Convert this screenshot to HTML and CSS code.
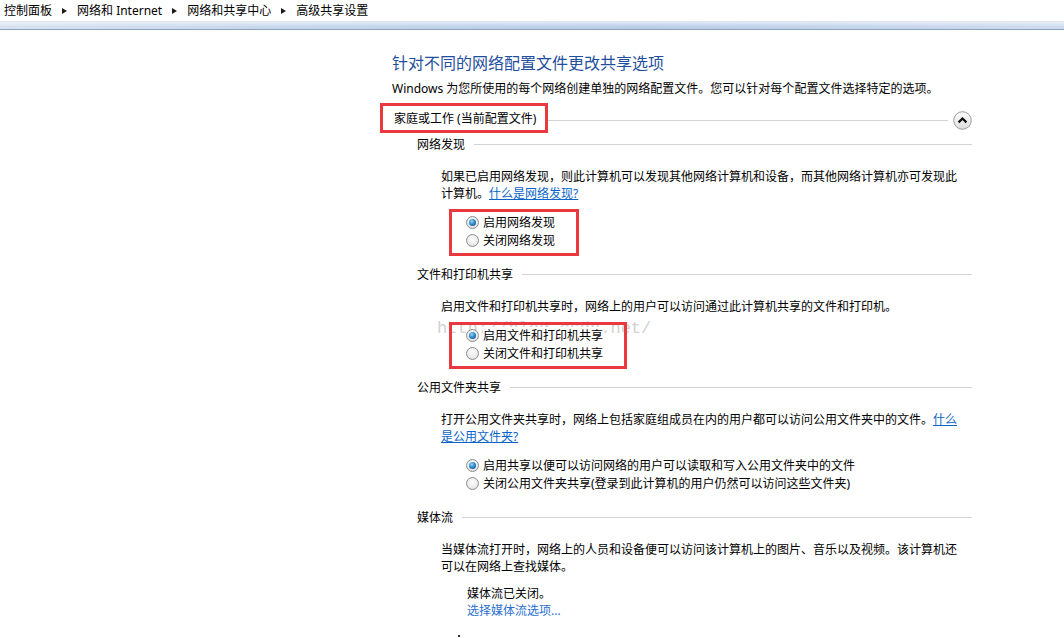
FILE: index.html
```html
<!DOCTYPE html>
<html lang="zh-CN">
<head>
<meta charset="utf-8">
<title>高级共享设置</title>
<link rel="stylesheet" href="styles.css">
</head>
<body>
<header class="crumbbar">
  <nav class="crumbs">
    <span>控制面板</span><i class="sep"></i>
    <span>网络和 Internet</span><i class="sep"></i>
    <span>网络和共享中心</span><i class="sep"></i>
    <span>高级共享设置</span>
  </nav>
</header>
<div class="band"></div>
<main class="content">
  <h1 class="title">针对不同的网络配置文件更改共享选项</h1>
  <p class="intro">Windows 为您所使用的每个网络创建单独的网络配置文件。您可以针对每个配置文件选择特定的选项。</p>

  <div class="profile-head">
    <span class="profile-name">家庭或工作 (当前配置文件)</span>
    <span class="rule rule-profile"></span>
    <span class="collapse">
      <svg width="19" height="19" viewBox="0 0 19 19">
        <defs>
          <linearGradient id="cg" x1="0" y1="0" x2="0" y2="1">
            <stop offset="0" stop-color="#ffffff"/>
            <stop offset="1" stop-color="#dcdcdc"/>
          </linearGradient>
        </defs>
        <circle cx="9.5" cy="9.5" r="8.8" fill="url(#cg)" stroke="#9d9d9d" stroke-width="1"/>
        <path d="M5.6 11.4 L9.5 7.5 L13.4 11.4" fill="none" stroke="#111" stroke-width="2.2" stroke-linejoin="miter"/>
      </svg>
    </span>
  </div>

  <section class="sec first">
    <div class="sec-head"><span>网络发现</span><span class="rule"></span></div>
    <p class="desc">如果已启用网络发现，则此计算机可以发现其他网络计算机和设备，而其他网络计算机亦可发现此计算机。<a class="link" href="#">什么是网络发现?</a></p>
    <div class="options marked">
      <label class="opt"><span class="radio on"></span><span class="lbl">启用网络发现</span></label>
      <label class="opt"><span class="radio"></span><span class="lbl">关闭网络发现</span></label>
    </div>
  </section>

  <section class="sec">
    <div class="sec-head"><span>文件和打印机共享</span><span class="rule"></span></div>
    <p class="desc">启用文件和打印机共享时，网络上的用户可以访问通过此计算机共享的文件和打印机。</p>
    <div class="options marked">
      <span class="watermark">http://blog.csdn.net/</span>
      <label class="opt"><span class="radio on"></span><span class="lbl">启用文件和打印机共享</span></label>
      <label class="opt"><span class="radio"></span><span class="lbl">关闭文件和打印机共享</span></label>
    </div>
  </section>

  <section class="sec">
    <div class="sec-head"><span>公用文件夹共享</span><span class="rule"></span></div>
    <p class="desc">打开公用文件夹共享时，网络上包括家庭组成员在内的用户都可以访问公用文件夹中的文件。<a class="link" href="#">什么是公用文件夹?</a></p>
    <div class="options">
      <label class="opt"><span class="radio on"></span><span class="lbl">启用共享以便可以访问网络的用户可以读取和写入公用文件夹中的文件</span></label>
      <label class="opt"><span class="radio"></span><span class="lbl">关闭公用文件夹共享(登录到此计算机的用户仍然可以访问这些文件夹)</span></label>
    </div>
  </section>

  <section class="sec">
    <div class="sec-head"><span>媒体流</span><span class="rule"></span></div>
    <p class="desc">当媒体流打开时，网络上的人员和设备便可以访问该计算机上的图片、音乐以及视频。该计算机还可以在网络上查找媒体。</p>
    <div class="media">
      <div>媒体流已关闭。</div>
      <a class="link plain" href="#">选择媒体流选项...</a>
    </div>
  </section>
  <div class="dot"></div>
</main>
</body>
</html>
```

FILE: styles.css
```css
* { box-sizing: border-box; }
html, body { margin: 0; padding: 0; background: #fff; }
body {
  width: 1064px;
  height: 638px;
  overflow: hidden;
  font-family: "Noto Sans", "Noto Sans CJK SC", sans-serif;
  font-size: 12px;
  color: #000;
}

/* breadcrumb */
.crumbbar { height: 21px; background: #fff; }
.crumbs {
  display: flex;
  align-items: center;
  height: 21px;
  padding-left: 4px;
  line-height: 21px;
  color: #000;
}
.sep {
  display: block;
  width: 0;
  height: 0;
  margin: 0 10px;
  border-left: 5px solid #1a1a1a;
  border-top: 3.5px solid transparent;
  border-bottom: 3.5px solid transparent;
}
.band {
  height: 9px;
  border-top: 1px solid #e1e6ee;
  border-bottom: 1px solid #8ea1bb;
  background:
    linear-gradient(180deg, rgba(255,255,255,0.55), rgba(255,255,255,0) 70%),
    linear-gradient(90deg, #d6e2f1 0%, #c3d5ec 30%, #b9cde9 60%, #cddbef 100%);
}

/* main */
.content { margin-left: 392px; width: 580px; }
.title {
  margin: 23px 0 0;
  font-size: 16px;
  line-height: 20px;
  font-weight: normal;
  color: #1f4f9e;
}
.intro { margin: 7px 0 0; line-height: 17px; }

.profile-head {
  display: flex;
  align-items: center;
  height: 19px;
  margin-top: 14px;
}
.profile-name {
  position: relative;
  margin-left: 2px;
  margin-bottom: 5px;
  line-height: 17px;
  white-space: nowrap;
}
.profile-name::after {
  content: "";
  position: absolute;
  top: -7px; right: -12px; bottom: -6px; left: -14px;
  border: 3px solid #e8393e;
  z-index: 3;
}
.rule { flex: 1; height: 1px; background: #d3d3d3; margin-left: 9px; }
.rule-profile { margin-right: 5px; }
.collapse { display: block; width: 19px; height: 19px; }
.collapse svg { display: block; }

.sec { padding-left: 25px; margin-top: 16.5px; }
.sec.first { margin-top: 6px; }
.sec-head { display: flex; align-items: center; line-height: 17px; white-space: nowrap; }

.desc { margin: 14.5px 0 0 24px; width: 525px; line-height: 17px; }
.link { color: #0a64c8; text-decoration: underline; }
.link.plain { text-decoration: none; color: #2a6fd2; }

.options {
  position: relative;
  display: flex;
  flex-direction: column;
  width: max-content;
  margin: 12px 0 0 49px;
}
.marked::after {
  content: "";
  position: absolute;
  top: -4.5px; right: -24px; bottom: -6px; left: -17px;
  border: 3px solid #e8393e;
  z-index: 3;
}
.opt { display: flex; align-items: center; height: 18px; gap: 4px; position: relative; z-index: 1; }
.lbl { line-height: 17px; background: #fff; white-space: nowrap; }

.radio {
  display: flex;
  align-items: center;
  justify-content: center;
  width: 13px;
  height: 13px;
  border-radius: 50%;
  border: 1px solid #8c8d8e;
  background: radial-gradient(circle at 50% 40%, #fdfdfd 0%, #ececec 55%, #d2d2d2 100%);
}
.radio.on::after {
  content: "";
  display: block;
  width: 7px;
  height: 7px;
  border-radius: 50%;
  background: radial-gradient(circle at 40% 35%, #9bd6f7 0%, #2e8ccc 45%, #0f3d6e 100%);
}

.watermark {
  position: absolute;
  left: -29px;
  top: -7.5px;
  font-family: "Liberation Mono", monospace;
  font-size: 17px;
  line-height: 20px;
  color: #d2d2d2;
  white-space: nowrap;
  z-index: 0;
}

.media { margin: 10px 0 0 50px; line-height: 17px; }
.dot { width: 2px; height: 2px; background: #333; margin: 16px 0 0 66px; }
```
